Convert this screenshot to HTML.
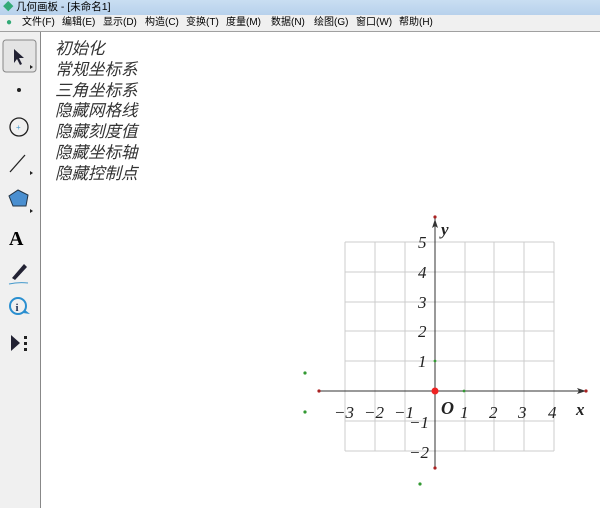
<!DOCTYPE html><html><head><meta charset="utf-8"><style>
body{margin:0;width:600px;height:508px;overflow:hidden;background:#fff;font-family:"Liberation Sans","Noto Sans CJK SC",sans-serif;position:relative}
.t{position:absolute;left:0;top:0;width:600px;height:15px;background:linear-gradient(#c9def2,#b7d1ec);font-size:10.5px;line-height:15px}
.m{position:absolute;left:0;top:15px;width:600px;height:16px;background:#f0f0f0;border-bottom:1px solid #a0a0a0;font-size:10px;line-height:16px}
.m span{position:absolute;top:0}
.tb{position:absolute;left:0;top:32px;width:40px;height:476px;background:#f0f0f0;border-right:1px solid #888}
.l{position:absolute;left:55px;top:37px;font-size:16.5px;line-height:20.8px;font-style:italic;color:#333;font-family:"Noto Sans CJK SC",sans-serif}
</style></head><body>
<div class="t"><span style="position:absolute;left:3px;color:#3a7">◆</span><span style="position:absolute;left:16px">几何画板 - [未命名1]</span></div>
<div class="m"><span style="left:6px;color:#3a7">●</span><span style="left:22px">文件(F)</span><span style="left:62px">编辑(E)</span><span style="left:103px">显示(D)</span><span style="left:145px">构造(C)</span><span style="left:186px">变换(T)</span><span style="left:226px">度量(M)</span><span style="left:271px">数据(N)</span><span style="left:314px">绘图(G)</span><span style="left:356px">窗口(W)</span><span style="left:399px">帮助(H)</span></div>
<div class="tb">
<svg width="40" height="476" viewBox="0 32 40 476">
<rect x="3" y="40" width="33" height="32" rx="3" fill="#e4e4e4" stroke="#888"/>
<path d="M14 49 L14 63 L17 59 L20 65 L22 64 L19 58 L24 58 Z" fill="#223"/><path d="M30 65 l3 2 -3 2z" fill="#222"/>
<circle cx="19" cy="90" r="2" fill="#222"/>
<circle cx="19" cy="127" r="9" fill="none" stroke="#222" stroke-width="1.3"/><text x="16" y="130" font-size="8" fill="#49c">+</text>
<line x1="10" y1="172" x2="25" y2="155" stroke="#222" stroke-width="1.3"/><path d="M30 171 l3 2 -3 2z" fill="#222"/>
<path d="M18 190 L28 195 L26 206 L13 206 L9 196 Z" fill="#4a8fd0" stroke="#234"/><path d="M30 209 l3 2 -3 2z" fill="#222"/>
<text x="9" y="245" font-size="20" font-weight="bold" font-family="Liberation Serif">A</text>
<path d="M12 278 L24 264 L27 267 L15 280 Z" fill="#223"/><path d="M9 284 Q18 282 28 283" stroke="#49c" fill="none"/>
<circle cx="18" cy="306" r="8" fill="none" stroke="#2a8fd0" stroke-width="2"/><text x="15.5" y="311" font-size="11" font-weight="bold" fill="#235" font-family="Liberation Serif">i</text><path d="M25 310 l5 4 -7 -1z" fill="#2a8fd0"/>
<path d="M11 335 L11 351 L20 343 Z" fill="#223"/><rect x="24" y="336" width="3" height="3" fill="#222"/><rect x="24" y="342" width="3" height="3" fill="#222"/><rect x="24" y="348" width="3" height="3" fill="#222"/>
</svg></div>
<div class="l">初始化<br>常规坐标系<br>三角坐标系<br>隐藏网格线<br>隐藏刻度值<br>隐藏坐标轴<br>隐藏控制点</div>
<svg style="position:absolute;left:0;top:0" width="600" height="508">
<g stroke="#ccc" stroke-width="1">
<line x1="345" y1="242" x2="345" y2="451"/><line x1="375" y1="242" x2="375" y2="451"/><line x1="405" y1="242" x2="405" y2="451"/><line x1="465" y1="242" x2="465" y2="451"/><line x1="494" y1="242" x2="494" y2="451"/><line x1="524" y1="242" x2="524" y2="451"/><line x1="554" y1="242" x2="554" y2="451"/>
<line x1="345" y1="242" x2="554" y2="242"/><line x1="345" y1="272" x2="554" y2="272"/><line x1="345" y1="302" x2="554" y2="302"/><line x1="345" y1="331" x2="554" y2="331"/><line x1="345" y1="361" x2="554" y2="361"/><line x1="345" y1="421" x2="554" y2="421"/><line x1="345" y1="451" x2="554" y2="451"/>
</g>
<line x1="319" y1="391" x2="586" y2="391" stroke="#333"/><line x1="435" y1="217" x2="435" y2="468" stroke="#333"/>
<path d="M586 391 l-9 -3 2 3 -2 3z" fill="#333"/><path d="M435 219 l-3 9 3 -2 3 2z" fill="#333"/>
<g fill="#a22"><circle cx="319" cy="391" r="1.6"/><circle cx="586" cy="391" r="1.6"/><circle cx="435" cy="217" r="1.6"/><circle cx="435" cy="468" r="1.6"/></g>
<circle cx="435" cy="391" r="3.5" fill="#e22"/>
<g fill="#393"><circle cx="305" cy="373" r="1.6"/><circle cx="305" cy="412" r="1.6"/><circle cx="420" cy="484" r="1.6"/><circle cx="435" cy="361" r="1.4"/><circle cx="464" cy="391" r="1.4"/></g>
<g font-family="Liberation Serif" font-style="italic" font-size="17" fill="#222">
<text x="418" y="248">5</text><text x="418" y="278">4</text><text x="418" y="308">3</text><text x="418" y="337">2</text><text x="418" y="367">1</text>
<text x="409" y="428">−1</text><text x="409" y="458">−2</text>
<text x="334" y="418">−3</text><text x="364" y="418">−2</text><text x="394" y="418">−1</text>
<text x="460" y="418">1</text><text x="489" y="418">2</text><text x="518" y="418">3</text><text x="548" y="418">4</text>
<text x="441" y="235" font-weight="bold" font-size="17">y</text><text x="576" y="415" font-weight="bold" font-size="17">x</text>
<text x="441" y="414" font-weight="bold" font-size="18">O</text></g>
</svg>
</body></html>
